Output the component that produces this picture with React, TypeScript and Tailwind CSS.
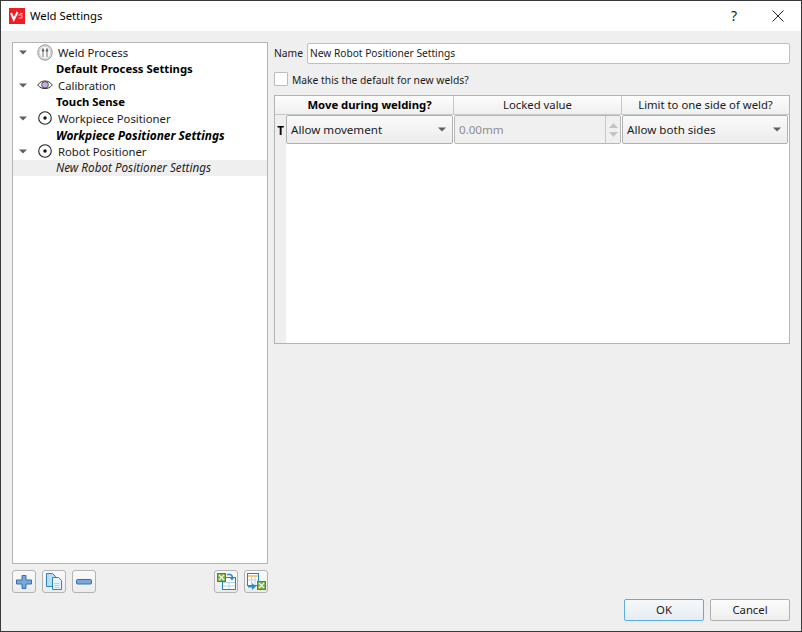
const font = "font-['Noto_Sans',sans-serif]"

function Arrow({ className = "" }: { className?: string }) {
  return (
    <svg width="8" height="5" viewBox="0 0 8 5" className={className}>
      <path d="M0 .5h8L4 4.500z" fill="#5f5f5f" />
    </svg>
  )
}

function ProcessIcon() {
  return (
    <svg width="16" height="17" viewBox="0 0 16 17">
      <ellipse cx="8" cy="8.500" rx="7.200" ry="7.700" fill="#f0f0f0" stroke="#8f8f8f" />
      <ellipse cx="8" cy="8.500" rx="5.700" ry="6.200" fill="#fafafa" stroke="#cfcfcf" />
      <path d="M6 4v9M10 4v9" stroke="#777" />
      <circle cx="6" cy="6.500" r="1.300" fill="#666" />
      <circle cx="10" cy="6.500" r="1.300" fill="#666" />
    </svg>
  )
}

function EyeIcon() {
  return (
    <svg width="16" height="12" viewBox="0 0 16 12">
      <path d="M.7 6C2.800 3.200 5 2 8 2s5.200 1.200 7.300 4c-2.100 2.500-4.300 3.600-7.300 3.600S2.800 8.500.7 6z" fill="#fff" stroke="#333" />
      <ellipse cx="8" cy="5.800" rx="3.400" ry="3.200" fill="#c9aee2" stroke="#333" strokeWidth="0.800" />
    </svg>
  )
}

function TargetIcon() {
  return (
    <svg width="16" height="16" viewBox="0 0 16 16">
      <circle cx="8" cy="8" r="6.300" fill="#fff" stroke="#222" strokeWidth="1.100" />
      <circle cx="8" cy="8" r="1.700" fill="#111" />
    </svg>
  )
}

function TreeParent({ icon, label }: { icon: React.ReactNode; label: string }) {
  return (
    <div className="flex h-[16.5px] items-center">
      <Arrow className="ml-[6px]" />
      <span className="ml-[10px] flex w-[16px] justify-center">{icon}</span>
      <span className="ml-[5px] text-[#1a1a1a]">{label}</span>
    </div>
  )
}

function TreeChild({ label, className = "" }: { label: string; className?: string }) {
  return (
    <div className={`flex h-[16.5px] items-center pl-[43px] ${className}`}>
      <span className="whitespace-nowrap">{label}</span>
    </div>
  )
}

function ToolButton({ children }: { children: React.ReactNode }) {
  return (
    <button className="flex h-[23px] w-[24px] items-center justify-center rounded-[3px] border border-[#b4b4b4] bg-gradient-to-b from-[#fafafa] to-[#ececec]">
      {children}
    </button>
  )
}

function PlusIcon() {
  return (
    <svg width="16" height="14" viewBox="0 0 16 14">
      <path d="M6 .500h4v4.500h5.500v4H10v4.500H6V9H.5V5H6z" fill="#7ba7dc" stroke="#3c6fa8" />
    </svg>
  )
}

function MinusIcon() {
  return (
    <svg width="16" height="6" viewBox="0 0 16 6">
      <rect x="0.500" y="0.500" width="15" height="4.500" rx="1" fill="#7ba7dc" stroke="#3c6fa8" />
    </svg>
  )
}

function PagesIcon() {
  return (
    <svg width="16" height="18" viewBox="0 0 16 18">
      <path d="M.5.500h6l3 3v10H.5z" fill="#b9dcee" stroke="#2c86bd" />
      <path d="M6.500 4.500h6l3 3v9h-9z" fill="#e6f3fa" stroke="#2c86bd" />
      <path d="M8.500 10.500h5M8.500 12.500h5M8.500 14.500h5" stroke="#a8d0e6" />
    </svg>
  )
}

function SheetBadge({ x, y }: { x: number; y: number }) {
  return (
    <g transform={`translate(${x} ${y})`}>
      <rect x="0.500" y="0.500" width="8" height="8" fill="#7fb24f" stroke="#4d8a2c" />
      <path d="M2 2l5 5M7 2L2 7" stroke="#eef6e4" strokeWidth="1.200" />
    </g>
  )
}

function ImportIcon() {
  return (
    <svg width="19" height="17" viewBox="0 0 19 17">
      <rect x="5.500" y="4.500" width="13" height="12" fill="#fff" stroke="#1f86c2" />
      <path d="M6 9.500h12M6 13h12M12 9v7" stroke="#b6d6ea" />
      <SheetBadge x={0} y={0} />
      <path d="M10 1.500h3a2.500 2.500 0 0 1 2 3.500" fill="none" stroke="#2c8fd0" strokeWidth="1.600" />
      <path d="M12.500 4.500h5L15 7.500z" fill="#2c8fd0" />
    </svg>
  )
}

function ExportIcon() {
  return (
    <svg width="19" height="17" viewBox="0 0 19 17">
      <rect x="0.500" y="0.500" width="11" height="12" fill="#fff" stroke="#1f86c2" />
      <path d="M1 3h10" stroke="#e8b85c" strokeWidth="1.500" />
      <path d="M1 7h10M4.500 4v8M8 4v8" stroke="#b6d6ea" />
      <SheetBadge x={10} y={8} />
      <path d="M1 12.500h4V10l4 3.500-4 3.500v-2.500H1z" fill="#2c8fd0" />
    </svg>
  )
}

function HeaderCell({ label, className = "" }: { label: string; className?: string }) {
  return (
    <div className={`flex h-[19px] items-center justify-center border-r border-b border-[#c8c8c8] bg-gradient-to-b from-[#fdfdfd] to-[#efefef] ${className}`}>
      {label}
    </div>
  )
}

function SelectCell({ label, className = "" }: { label: string; className?: string }) {
  return (
    <div className={`flex h-[29px] items-center justify-between rounded-[2px] border border-[#b0b0b0] bg-gradient-to-b from-[#fafafa] to-[#ececec] pl-[4px] pr-[6px] text-[11.6px] text-[#1a1a1a] ${className}`}>
      <span>{label}</span>
      <Arrow />
    </div>
  )
}

export default function App() {
  return (
    <div className={`flex h-[632px] w-[802px] flex-col border border-[#3a3a3a] bg-[#efefef] text-[11.3px] leading-none text-black ${font}`}>
      {/* Title bar */}
      <div className="flex h-[30px] shrink-0 items-center bg-white pl-[8px]">
        <svg width="16" height="16" viewBox="0 0 16 16">
          <rect width="16" height="16" fill="#ee1c25" />
          <path d="M2 5l2.800 6.500L8.500 4" fill="none" stroke="#fff" strokeWidth="2" />
          <path d="M9 7h4v3h-3.500M11 5.500h3" fill="none" stroke="#f9b5b5" />
        </svg>
        <span className="ml-[5px]">Weld Settings</span>
        <span className="ml-auto mr-[35px] text-[14px] text-[#222]">?</span>
        <svg width="12" height="12" viewBox="0 0 12 12" className="mr-[17px]">
          <path d="M.5.500l11 11M11.500.500l-11 11" stroke="#222" />
        </svg>
      </div>

      {/* Body */}
      <div className="flex flex-1 gap-[6px] pl-[11px] pr-[11px] pt-[11px]">
        <div className="flex w-[256px] flex-col">
          <div className="h-[522px] border border-[#b4b4b4] bg-white pt-[1px]">
            <TreeParent icon={<ProcessIcon />} label="Weld Process" />
            <TreeChild label="Default Process Settings" className="pb-[1px] font-bold" />
            <TreeParent icon={<EyeIcon />} label="Calibration" />
            <TreeChild label="Touch Sense" className="pb-[1px] font-bold" />
            <TreeParent icon={<TargetIcon />} label="Workpiece Positioner" />
            <TreeChild label="Workpiece Positioner Settings" className="pt-[2px] text-[11.9px] font-bold italic" />
            <TreeParent icon={<TargetIcon />} label="Robot Positioner" />
            <TreeChild label="New Robot Positioner Settings" className="bg-[#efefef] pt-[1px] text-[11.7px] italic text-[#222]" />
          </div>
          <div className="mt-[6px] flex gap-[6px]">
            <ToolButton>
              <PlusIcon />
            </ToolButton>
            <ToolButton>
              <PagesIcon />
            </ToolButton>
            <ToolButton>
              <MinusIcon />
            </ToolButton>
            <div className="flex-1" />
            <ToolButton>
              <ImportIcon />
            </ToolButton>
            <ToolButton>
              <ExportIcon />
            </ToolButton>
          </div>
        </div>

        <div className="flex w-[516px] flex-col">
          <div className="flex h-[22px] items-center">
            <span className="w-[33px] text-[10.3px] text-[#1a1a1a]">Name</span>
            <input
              readOnly
              value="New Robot Positioner Settings"
              className="h-[21px] flex-1 rounded-[2px] border border-[#c0c0c0] bg-white pl-[2px] pr-[2px] text-[10.2px] text-[#1a1a1a] outline-none"
            />
          </div>
          <label className="mt-[7px] flex h-[16px] items-center gap-[4px] text-[10.3px] text-[#1a1a1a]">
            <span className="h-[14px] w-[14px] rounded-[1px] border border-[#bcbcbc] bg-white" />
            <span className="pt-[2px]">Make this the default for new welds?</span>
          </label>
          <div className="mt-[8px] h-[249px] border border-[#b4b4b4] bg-white">
            <div className="grid grid-cols-[179px_168px_1fr]">
              <HeaderCell label="Move during welding?" className="pl-[11px] font-bold" />
              <HeaderCell label="Locked value" className="text-[#1a1a1a]" />
              <HeaderCell label="Limit to one side of weld?" className="border-r-0 text-[#1a1a1a]" />
            </div>
            <div className="flex h-[228px]">
              <div className="w-[11px] bg-[#efefef] pt-[10px] text-center text-[11.600px] font-bold">T</div>
              <div className="flex h-[30px] flex-1">
                <SelectCell label="Allow movement" className="w-[167px]" />
                <div className="ml-[1px] flex h-[29px] w-[167px] items-center rounded-[2px] border border-[#b8b8b8] bg-[#f0f0f0] pl-[4px] text-[11.600px] text-[#8e8e8e]">
                  <span className="flex-1">0.00mm</span>
                  <div className="flex h-full w-[15px] flex-col items-center justify-center gap-[4px] border-l border-[#c8c8c8]">
                    <svg width="9" height="5" viewBox="0 0 9 5">
                      <path d="M0 5h9L4.500 0z" fill="#c4c4c4" />
                    </svg>
                    <svg width="9" height="5" viewBox="0 0 9 5">
                      <path d="M0 0h9L4.500 5z" fill="#c4c4c4" />
                    </svg>
                  </div>
                </div>
                <SelectCell label="Allow both sides" className="ml-[1px] w-[166px]" />
              </div>
            </div>
          </div>
        </div>
      </div>

      {/* Footer */}
      <div className="flex justify-end gap-[6px] pb-[10px] pr-[11px]">
        <button className="h-[22px] w-[80px] rounded-[2px] border border-[#5aaee8] bg-gradient-to-b from-[#f6f9fc] to-[#e6ecf2] text-[#1a1a1a]">OK</button>
        <button className="h-[22px] w-[80px] rounded-[2px] border border-[#b0b0b0] bg-gradient-to-b from-[#fcfcfc] to-[#eeeeee] text-[#1a1a1a]">Cancel</button>
      </div>
    </div>
  )
}
